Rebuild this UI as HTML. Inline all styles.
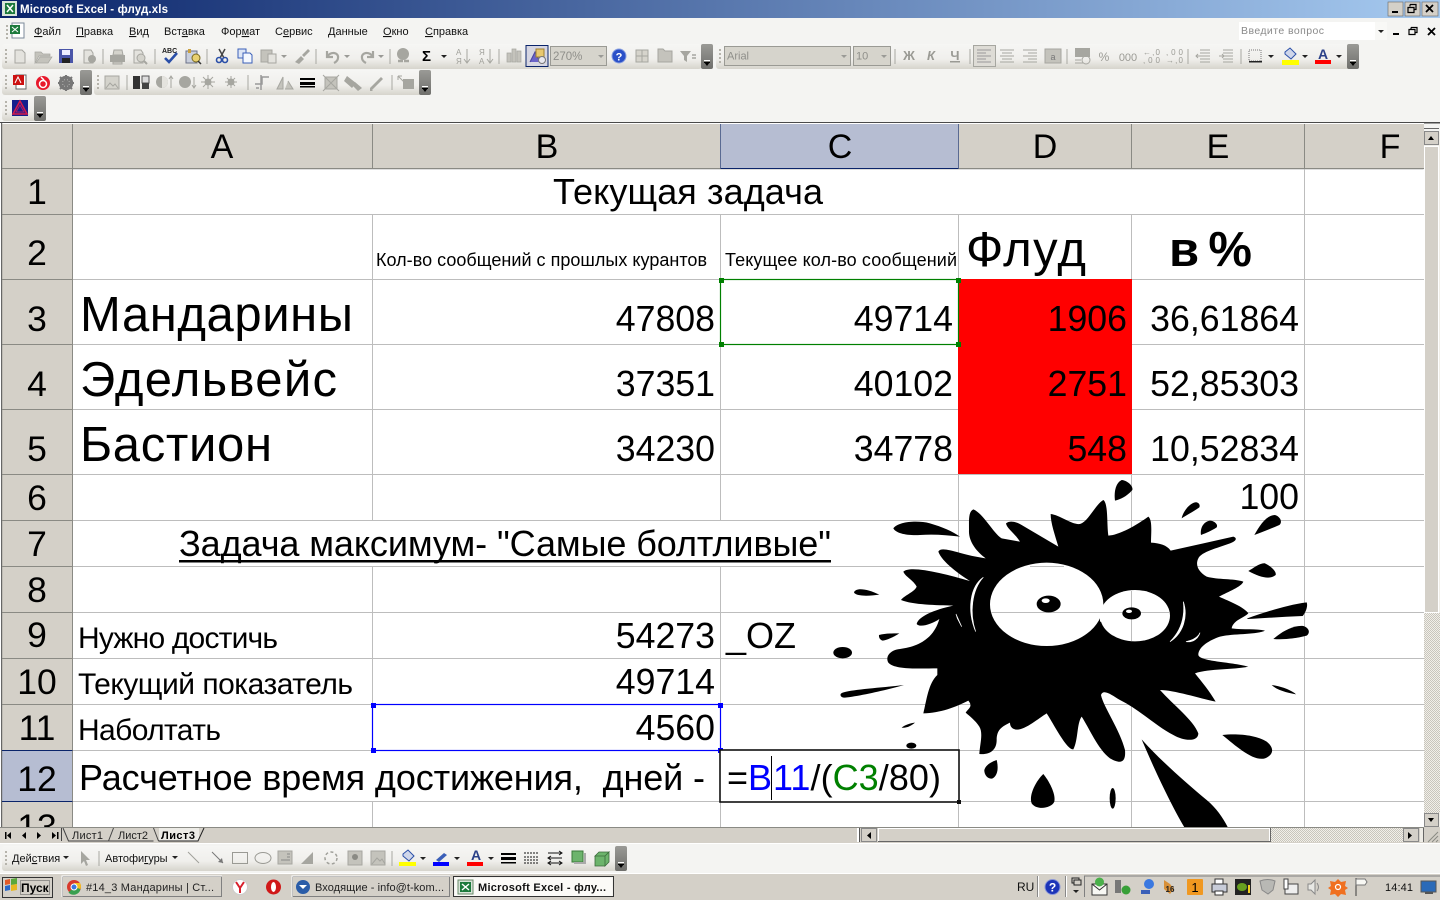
<!DOCTYPE html>
<html><head><meta charset="utf-8"><title>Microsoft Excel - флуд.xls</title>
<style>
html,body{margin:0;padding:0;width:1440px;height:900px;overflow:hidden;background:#f4f4f2}
svg{display:block}
text{font-family:"Liberation Sans","Noto Sans CJK SC",sans-serif;white-space:pre}
.u{text-decoration:underline}
.m{font-size:11px;fill:#111}
.c{font-size:36px;fill:#000}
.h{font-size:34px;fill:#000;text-anchor:middle}
.r{font-size:35.5px;fill:#000;text-anchor:middle}
.n{font-size:35.7px;fill:#000;text-anchor:end}
.b{font-size:49px;fill:#000}
.t{font-size:30px;fill:#000}
.g{fill:#a6a6a0}
.gs{stroke:#a6a6a0;fill:none}
.sep{stroke:#a8a8a2;stroke-width:1}
.sm{font-size:11px;fill:#222}
</style></head><body>
<svg width="1440" height="900" viewBox="0 0 1440 900" xmlns="http://www.w3.org/2000/svg">
<defs>
<linearGradient id="tb" x1="0" x2="1" y1="0" y2="0"><stop offset="0" stop-color="#0a246a"/><stop offset="1" stop-color="#a6caf0"/></linearGradient>
<linearGradient id="bar" x1="0" x2="0" y1="0" y2="1"><stop offset="0" stop-color="#f6f6f4"/><stop offset=".6" stop-color="#f0efec"/><stop offset="1" stop-color="#d6d4cc"/></linearGradient>
<linearGradient id="chev" x1="0" x2="0" y1="0" y2="1"><stop offset="0" stop-color="#9a9a96"/><stop offset="1" stop-color="#6f6f6c"/></linearGradient>
<pattern id="dith" width="2" height="2" patternUnits="userSpaceOnUse"><rect width="2" height="2" fill="#f1efe9"/><rect width="1" height="1" fill="#c8c5bc"/><rect x="1" y="1" width="1" height="1" fill="#c8c5bc"/></pattern>
<g id="chv"><rect width="12" height="25" rx="2" fill="url(#chev)"/><rect x="3" y="16" width="6" height="1" fill="#fff"/><path d="M3 18h6l-3 4z" fill="#000"/><rect x="3" y="18" width="6" height="1" fill="#000"/></g>
<g id="grip"><rect x="0" y="0" width="2" height="2" fill="#b5b3ab"/><rect x="0" y="4" width="2" height="2" fill="#b5b3ab"/><rect x="0" y="8" width="2" height="2" fill="#b5b3ab"/><rect x="0" y="12" width="2" height="2" fill="#b5b3ab"/></g>
<path id="dn" d="M0 0h6l-3 3z" fill="#222"/>
<path id="dng" d="M0 0h6l-3 3z" fill="#9a9a96"/>
<clipPath id="sheet"><rect x="0" y="124" width="1424" height="703"/></clipPath>
</defs>

<!-- background -->
<rect width="1440" height="900" fill="#f4f4f2"/>
<!-- title bar -->
<rect width="1440" height="18" fill="url(#tb)"/>
<rect x="2" y="1" width="15" height="15" fill="#d8e4d8"/><rect x="5" y="3" width="10" height="11" fill="#1c7a3c"/><path d="M7 5l6 7M13 5l-6 7" stroke="#fff" stroke-width="1.5"/>
<text x="20" y="13" font-size="11.5" font-weight="bold" fill="#fff" textLength="148">Microsoft Excel - флуд.xls</text>
<g>
<rect x="1388" y="2" width="15" height="14" fill="#d4d0c8" stroke="#666" stroke-width=".6"/><rect x="1392" y="11" width="6" height="2" fill="#000"/>
<rect x="1405" y="2" width="15" height="14" fill="#d4d0c8" stroke="#666" stroke-width=".6"/><path d="M1410 4.5h6v5h-2M1410 4.5v2M1408 7.5h6v5h-6z" fill="none" stroke="#000" stroke-width="1.2"/>
<rect x="1422" y="2" width="16" height="14" fill="#d4d0c8" stroke="#666" stroke-width=".6"/><path d="M1426 5l7 7M1433 5l-7 7" stroke="#000" stroke-width="1.8"/>
</g>

<!-- menu bar -->
<use href="#grip" x="6" y="25"/>
<rect x="12" y="23" width="12" height="15" fill="#fff" stroke="#7b8a9a"/><rect x="10" y="25" width="10" height="9" fill="#1c7a3c"/><path d="M12 27l6 5M18 27l-6 5" stroke="#fff"/>
<text class="m" y="35"><tspan x="34"><tspan class="u">Ф</tspan>айл</tspan><tspan x="76"><tspan class="u">П</tspan>равка</tspan><tspan x="129"><tspan class="u">В</tspan>ид</tspan><tspan x="164">Вст<tspan class="u">а</tspan>вка</tspan><tspan x="221">Фор<tspan class="u">м</tspan>ат</tspan><tspan x="275">С<tspan class="u">е</tspan>рвис</tspan><tspan x="328"><tspan class="u">Д</tspan>анные</tspan><tspan x="383"><tspan class="u">О</tspan>кно</tspan><tspan x="425"><tspan class="u">С</tspan>правка</tspan></text>
<rect x="1239" y="22" width="136" height="18" fill="#fff"/><rect x="1375" y="22" width="12" height="18" fill="#f8f8f6"/>
<text x="1241" y="34" font-size="10.5" fill="#8a8a8a" textLength="83">Введите вопрос</text>
<use href="#dn" x="1378" y="30"/>
<rect x="1393" y="33" width="6" height="2" fill="#000"/>
<path d="M1411 27.5h6v5h-2M1411 27.5v2M1409 29.5h6v5h-6z" fill="none" stroke="#000" stroke-width="1.2"/>
<path d="M1428 28l7 7M1435 28l-7 7" stroke="#000" stroke-width="1.8"/>

<!-- toolbar strips -->
<rect x="2" y="44" width="700" height="25" rx="3" fill="url(#bar)"/>
<use href="#chv" x="701" y="44"/>
<rect x="716" y="44" width="636" height="25" rx="3" fill="url(#bar)"/>
<use href="#chv" x="1347" y="44"/>
<rect x="2" y="70" width="80" height="25" rx="3" fill="url(#bar)"/>
<use href="#chv" x="80" y="70"/>
<rect x="94" y="70" width="328" height="25" rx="3" fill="url(#bar)"/>
<use href="#chv" x="419" y="70"/>
<rect x="2" y="96" width="34" height="25" rx="3" fill="url(#bar)"/>
<use href="#chv" x="34" y="96"/>
<use href="#grip" x="5" y="49"/><use href="#grip" x="5" y="75"/><use href="#grip" x="5" y="101"/><use href="#grip" x="719" y="49"/><use href="#grip" x="97" y="75"/>

<!-- toolbar 1 icons -->
<path d="M15 50h7l3 3v10H15z" fill="#e4e3de" stroke="#a6a6a0"/>
<path d="M35 63V52h6l2 2h7v2h-11l-4 7zM36 63l4-6h12l-4 6z" fill="#c4c3bc" stroke="#a6a6a0" stroke-width=".7"/>
<rect x="59" y="49" width="14" height="14" fill="#4a55a8"/><rect x="62" y="50" width="8" height="5" fill="#eef"/><rect x="62" y="58" width="8" height="5" fill="#222"/>
<path d="M84 50h7l2 3v10H84z" fill="#e4e3de" stroke="#a6a6a0"/><circle cx="92" cy="59" r="4" class="g"/>
<line class="sep" x1="103" y1="49" x2="103" y2="64"/>
<rect x="110" y="55" width="15" height="7" class="g"/><path d="M113 55l1-5h8l1 5zM113 62h9v2h-9z" fill="#d4d3cc" stroke="#a6a6a0"/>
<path d="M134 50h7l2 3v10h-9z" fill="#e4e3de" stroke="#a6a6a0"/><circle cx="141" cy="58" r="4" fill="#d4d3cc" stroke="#a6a6a0"/><path d="M144 61l3 3" stroke="#a6a6a0" stroke-width="2"/>
<line class="sep" x1="155" y1="49" x2="155" y2="64"/>
<text x="162" y="53" font-size="7" font-weight="bold" fill="#222">ABC</text><path d="M165 58l4 4 8-9" stroke="#2a4fa8" stroke-width="2.6" fill="none"/>
<rect x="186" y="51" width="11" height="12" fill="#c9cfdc" stroke="#6a7188"/><rect x="188" y="49" width="3" height="4" fill="#c8a040"/><circle cx="196" cy="58" r="4" fill="#e8d070" stroke="#7a6a20"/><path d="M198 61l3 3" stroke="#333" stroke-width="1.5"/>
<line class="sep" x1="207" y1="49" x2="207" y2="64"/>
<path d="M219 49l5 9M225 49l-5 9" stroke="#444" stroke-width="1.5"/><circle cx="219" cy="60" r="2.5" fill="none" stroke="#2a4fa8" stroke-width="1.6"/><circle cx="225" cy="60" r="2.5" fill="none" stroke="#2a4fa8" stroke-width="1.6"/>
<path d="M238 49h8l0 9h-8z" fill="#dde6f6" stroke="#3a5fb8"/><path d="M243 53h7l2 2v8h-9z" fill="#f4f8ff" stroke="#3a5fb8"/>
<rect x="261" y="50" width="11" height="12" fill="#c4c3bc" stroke="#a6a6a0"/><rect x="268" y="54" width="8" height="9" fill="#e4e3de" stroke="#a6a6a0"/>
<use href="#dng" x="281" y="55"/>
<path d="M295 62l6-6 3 3-5 5zM302 55l6-6 2 2-6 6z" class="g"/>
<line class="sep" x1="316" y1="49" x2="316" y2="64"/>
<path d="M327 51v6h6M327 57c3-6 12-5 11 1 0 2-2 4-4 5" fill="none" stroke="#a6a6a0" stroke-width="2.2"/>
<use href="#dng" x="344" y="55"/>
<path d="M373 51v6h-6M373 57c-3-6-12-5-11 1 0 2 2 4 4 5" fill="none" stroke="#a6a6a0" stroke-width="2.2"/>
<use href="#dng" x="378" y="55"/>
<line class="sep" x1="390" y1="49" x2="390" y2="64"/>
<circle cx="403" cy="54" r="6" class="g"/><path d="M398 61h5M404 61h5" stroke="#a6a6a0" stroke-width="2.5"/>
<text x="422" y="61" font-size="15" font-weight="bold" fill="#000">Σ</text>
<use href="#dn" x="441" y="55"/>
<text x="456" y="55" font-size="8" fill="#a0a09a">А</text><text x="456" y="64" font-size="8" fill="#a0a09a">Я</text><path d="M467 49v13M464 59l3 4 3-4" class="gs"/>
<text x="479" y="55" font-size="8" fill="#a0a09a">Я</text><text x="479" y="64" font-size="8" fill="#a0a09a">А</text><path d="M490 49v13M487 59l3 4 3-4" class="gs"/>
<line class="sep" x1="499" y1="49" x2="499" y2="64"/>
<path d="M507 53h4v9h-4zM512 49h4v13h-4zM517 51h4v11h-4z" fill="#c4c3bc" stroke="#a6a6a0" stroke-width=".7"/>
<rect x="526" y="45.500" width="22" height="21" fill="#d6d6e2" stroke="#0a246a"/>
<path d="M530 62l5-10 5 10" fill="#6a63c8" stroke="#4a44a0"/><rect x="536" y="49" width="8" height="8" fill="#e8c870" stroke="#a08030"/><circle cx="542" cy="60" r="3.500" fill="#e8e8f0" stroke="#777"/>
<rect x="550.500" y="46.500" width="56" height="19" fill="#d6d4cc" stroke="#9a9a94"/>
<text x="553" y="60" font-size="11.500" fill="#8f8f8a">270%</text><use href="#dng" x="598" y="55"/>
<circle cx="619" cy="56" r="7" fill="#2a50c8" stroke="#8aa0e0"/><text x="619" y="60.500" font-size="11" font-weight="bold" fill="#fff" text-anchor="middle">?</text>
<rect x="636" y="50" width="12" height="12" fill="#d6d4cc" stroke="#a6a6a0"/><path d="M642 50v12M636 56h12" class="gs"/>
<path d="M658 49h5l2 2h7v11h-14z" fill="#c4c3bc" stroke="#a6a6a0"/>
<path d="M680 51h11l-4 5v6l-3-2v-4z" class="g"/><path d="M692 55h4M692 58h4" stroke="#a6a6a0" stroke-width="1.500"/>

<!-- toolbar 1b -->
<rect x="724.500" y="46.500" width="126" height="19" fill="#d6d4cc" stroke="#9a9a94"/>
<text x="727" y="59.500" font-size="11" fill="#8f8f8a">Arial</text><use href="#dng" x="841" y="55"/>
<rect x="853.500" y="46.500" width="37" height="19" fill="#d6d4cc" stroke="#9a9a94"/>
<text x="856" y="59.500" font-size="11" fill="#8f8f8a">10</text><use href="#dng" x="881" y="55"/>
<line class="sep" x1="895" y1="49" x2="895" y2="64"/>
<text x="909" y="60" font-size="13" font-weight="bold" fill="#9a9a94" text-anchor="middle">Ж</text>
<text x="931" y="60" font-size="13" font-weight="bold" font-style="italic" fill="#9a9a94" text-anchor="middle">К</text>
<text x="955" y="60" font-size="13" font-weight="bold" fill="#9a9a94" text-anchor="middle">Ч</text><rect x="950" y="61" width="10" height="1.500" fill="#9a9a94"/>
<line class="sep" x1="970" y1="49" x2="970" y2="64"/>
<rect x="973.500" y="45.500" width="22" height="21" fill="#dedcd6" stroke="#a6a6a0"/>
<path d="M977 50h14M977 53h9M977 56h14M977 59h9M977 62h14" stroke="#999" />
<path d="M1000 50h14M1002 53h10M1000 56h14M1002 59h10M1000 62h14" stroke="#a6a6a0"/>
<path d="M1023 50h14M1028 53h9M1023 56h14M1028 59h9M1023 62h14" stroke="#a6a6a0"/>
<rect x="1045" y="49" width="16" height="14" fill="#c4c3bc" stroke="#a6a6a0"/><text x="1053" y="60" font-size="9" fill="#777" text-anchor="middle">a</text>
<line class="sep" x1="1067" y1="49" x2="1067" y2="64"/>
<rect x="1075" y="48" width="15" height="9" class="g"/><circle cx="1086" cy="60" r="4" class="gs"/><path d="M1075 60h6M1075 63h8" class="gs"/>
<text x="1104" y="61" font-size="12" fill="#9a9a94" text-anchor="middle">%</text>
<text x="1128" y="61" font-size="11" fill="#9a9a94" text-anchor="middle">000</text>
<text x="1143" y="55" font-size="8" fill="#9a9a94" textLength="17">←,0</text><text x="1143" y="63" font-size="8" fill="#9a9a94" textLength="17">,00</text>
<text x="1166" y="55" font-size="8" fill="#9a9a94" textLength="17">,00</text><text x="1166" y="63" font-size="8" fill="#9a9a94" textLength="17">→,0</text>
<line class="sep" x1="1188" y1="49" x2="1188" y2="64"/>
<path d="M1200 50h10M1200 53h10M1200 56h10M1200 59h10M1200 62h10" stroke="#a6a6a0"/><path d="M1196 56h5M1198 54l-2 2 2 2" class="gs"/>
<path d="M1223 50h10M1223 53h10M1223 56h10M1223 59h10M1223 62h10" stroke="#a6a6a0"/><path d="M1219 56h5M1222 54l2 2-2 2" class="gs"/>
<line class="sep" x1="1241" y1="49" x2="1241" y2="64"/>
<rect x="1249" y="50" width="12" height="11" fill="none" stroke="#777" stroke-dasharray="1 1"/><rect x="1249" y="61" width="13" height="1.500" fill="#222"/>
<use href="#dn" x="1268" y="55"/>
<path d="M1285 52l5-4 6 6-5 5-6-5z" fill="#cfd6ea" stroke="#2a4fa8"/><rect x="1282" y="60" width="17" height="5" fill="#ffff00"/>
<use href="#dn" x="1302" y="55"/>
<text x="1323" y="59" font-size="14" font-weight="bold" fill="#2a4088" text-anchor="middle">A</text><rect x="1315" y="60" width="16" height="4" fill="#f00"/>
<use href="#dn" x="1336" y="55"/>

<!-- toolbar 2 icons -->
<rect x="16" y="75" width="10" height="14" fill="#fff" stroke="#666"/><rect x="13" y="75" width="11" height="10" fill="#cc1111"/><path d="M15 83l3-6 3 6" stroke="#fff" fill="none"/>
<circle cx="43" cy="83" r="7" fill="#e8192c"/><circle cx="43" cy="84" r="3.500" fill="none" stroke="#fff" stroke-width="1.500"/><path d="M41 77l3 3" stroke="#fff" stroke-width="1.500"/>
<circle cx="66" cy="83" r="5.500" fill="none" stroke="#777" stroke-width="3.500"/><path d="M66 75v16M58 83h16M60 77l12 12M72 77l-12 12" stroke="#777" stroke-width="2"/>
<rect x="105" y="76" width="14" height="13" fill="#d4d3cc" stroke="#a6a6a0"/><path d="M106 88l4-5 3 3 2-2 3 4" class="gs"/>
<line class="sep" x1="127" y1="75" x2="127" y2="90"/>
<rect x="133" y="76" width="7" height="13" fill="#333"/><rect x="142" y="76" width="7" height="7" fill="#ddd" stroke="#555"/><rect x="142" y="83" width="7" height="6" fill="#444"/>
<circle cx="162" cy="82" r="6" class="g"/><path d="M162 76a6 6 0 0 1 0 12z" fill="#e4e3de"/><path d="M171 88v-11M169 79l2-3 2 3" class="gs"/>
<circle cx="185" cy="82" r="6" class="g"/><path d="M194 77v11M192 85l2 3 2-3" class="gs"/>
<circle cx="208" cy="82" r="3.500" class="g"/><path d="M208 75v14M201 82h14M203 77l10 10M213 77l-10 10" class="gs"/>
<circle cx="231" cy="82" r="3.500" class="g"/><path d="M231 76v12M225 82h12M227 78l8 8M235 78l-8 8" class="gs"/>
<line class="sep" x1="248" y1="75" x2="248" y2="90"/>
<path d="M255 84h7v-7h7M261 75v15M256 88h3" stroke="#999" fill="none" stroke-width="1.500"/>
<path d="M277 89l6-12v12zM285 89h8l-5-8" fill="#c4c3bc" stroke="#a6a6a0"/>
<rect x="300" y="78" width="15" height="2" fill="#000"/><rect x="300" y="82" width="15" height="3" fill="#000"/><rect x="300" y="86" width="15" height="1.500" fill="#000"/>
<rect x="325" y="77" width="12" height="12" fill="#c4c3bc" stroke="#a6a6a0"/><path d="M323 75l16 16M339 75l-16 16" class="gs"/>
<path d="M347 76l9 7-4 5-8-7zM355 82l7 6-4 3-5-5z" class="g"/>
<path d="M370 88l11-11 2 2-11 11zM370 88v3h3" class="g"/>
<line class="sep" x1="392" y1="75" x2="392" y2="90"/>
<rect x="403" y="79" width="11" height="10" class="g"/><path d="M398 76l7 7M398 76v4M398 76h4" class="gs"/>

<!-- toolbar 3 icon -->
<rect x="12" y="100" width="16" height="16" fill="#141f8c"/><path d="M20 101l7 13H13z" fill="none" stroke="#d81a4a" stroke-width="1.500"/><path d="M20 105l4 7h-8z" fill="none" stroke="#b01868"/>

<!-- sheet top line -->
<rect x="0" y="122" width="1440" height="1.500" fill="#4a4a4a"/>
<rect x="0" y="123" width="1424" height="704" fill="#fff"/>

<!-- headers -->
<rect x="1" y="124" width="1423" height="44" fill="#d4d0c8"/>
<rect x="1" y="124" width="71" height="703" fill="#d4d0c8"/>
<rect x="721" y="124" width="237" height="44" fill="#b6bdd2"/>
<rect x="1" y="751" width="71" height="50" fill="#b6bdd2"/>
<rect x="1" y="123" width="1.200" height="704" fill="#666"/>

<!-- red -->
<rect x="958" y="279" width="174" height="196" fill="#f00"/>

<!-- grid -->
<g stroke="#bdbdbd" stroke-width="1" fill="none" shape-rendering="crispEdges">
<path d="M72.500 169H1423.500M73 214.500H1424M73 279.500H958M1132 279.500H1424M73 344.500H958M1132 344.500H1424M73 409.500H958M1132 409.500H1424M73 474.500H1424M73 520.500H1424M73 566.500H1424M73 612.500H1424M73 658.500H1424M73 704.500H1424M73 750.500H1424M73 801.500H1424"/>
<path d="M372.500 215V520M372.500 566V750M372.500 802V827"/>
<path d="M720.500 215V520M720.500 566V827"/>
<path d="M958.500 215V279M958.500 475V827"/>
<path d="M1131.500 215V279M1131.500 475V827"/>
<path d="M1304.500 169V827"/>
</g>
<g stroke="#8a8a84" stroke-width="1" fill="none" shape-rendering="crispEdges">
<path d="M72.500 124V827M372.500 124V168M720.500 124V168M958.500 124V168M1131.500 124V168M1304.500 124V168"/>
<path d="M2 168.500H1424M2 214.500H72M2 279.500H72M2 344.500H72M2 409.500H72M2 474.500H72M2 520.500H72M2 566.500H72M2 612.500H72M2 658.500H72M2 704.500H72M2 750.500H72M2 801.500H72"/>
</g>
<path d="M720.500 168.500H958.500M2 750.500H72.500M2 801.500H72.500" fill="none" stroke="#0a246a" stroke-width="1" shape-rendering="crispEdges"/>
<path d="M720.500 124V168M958.500 124V168" fill="none" stroke="#5a6a92" stroke-width="1" shape-rendering="crispEdges"/>

<g clip-path="url(#sheet)">
<!-- header labels -->
<text class="h" x="222" y="158">A</text><text class="h" x="547" y="158">B</text><text class="h" x="840" y="158">C</text><text class="h" x="1045" y="158">D</text><text class="h" x="1218" y="158">E</text><text class="h" x="1390" y="158">F</text>
<text class="r" x="37" y="204">1</text><text class="r" x="37" y="265">2</text><text class="r" x="37" y="331">3</text><text class="r" x="37" y="396">4</text><text class="r" x="37" y="461">5</text><text class="r" x="37" y="510">6</text><text class="r" x="37" y="556">7</text><text class="r" x="37" y="602">8</text><text class="r" x="37" y="647">9</text><text class="r" x="37" y="694">10</text><text class="r" x="37" y="740">11</text><text class="r" x="37" y="791">12</text><text class="r" x="37" y="839">13</text>

<!-- cells -->
<text class="c" x="553" y="204" textLength="270">Текущая задача</text>
<text x="376" y="266" font-size="18" textLength="331">Кол-во сообщений с прошлых курантов</text>
<text x="725" y="266" font-size="18" textLength="232">Текущее кол-во сообщений</text>
<text class="b" x="966" y="266" textLength="120">Флуд</text>
<text class="b" x="1169" y="266" font-weight="bold" textLength="83">в %</text>
<text class="b" x="80" y="331" textLength="273">Мандарины</text>
<text class="b" x="80" y="396" textLength="257">Эдельвейс</text>
<text class="b" x="80" y="461" textLength="192">Бастион</text>
<text class="n" x="715" y="331">47808</text><text class="n" x="953" y="331">49714</text><text class="n" x="1127" y="331">1906</text><text class="n" x="1299" y="331">36,61864</text>
<text class="n" x="715" y="396">37351</text><text class="n" x="953" y="396">40102</text><text class="n" x="1127" y="396">2751</text><text class="n" x="1299" y="396">52,85303</text>
<text class="n" x="715" y="461">34230</text><text class="n" x="953" y="461">34778</text><text class="n" x="1127" y="461">548</text><text class="n" x="1299" y="461">10,52834</text>
<text class="n" x="1299" y="509">100</text>
<text class="c" x="179" y="556" textLength="652">Задача максимум- "Самые болтливые"</text>
<rect x="179" y="560" width="652" height="2.500" fill="#000"/>
<text class="t" x="78" y="648" textLength="200">Нужно достичь</text>
<text class="t" x="78" y="694" textLength="275">Текущий показатель</text>
<text class="t" x="78" y="740" textLength="143">Наболтать</text>
<text class="n" x="715" y="648">54273</text><text class="c" x="726" y="648">_OZ</text>
<text class="n" x="715" y="694">49714</text>
<text class="n" x="715" y="740">4560</text>
<text class="c" x="79" y="790" textLength="626">Расчетное время достижения,  дней -</text>

<!-- blot -->
<g transform="translate(820 470) scale(.33333)" fill="#000">
<path d="M460 118C490 130 520 190 545 205L600 215C585 190 560 175 558 160C570 150 590 155 610 168L715 230C705 195 692 160 692 132C720 135 755 165 780 162C805 155 825 105 850 90C865 100 860 160 865 197C900 195 950 165 985 140C998 150 993 190 993 218C1020 220 1040 225 1052 242L1150 220L1240 200C1255 205 1245 215 1230 220C1190 235 1145 245 1135 265C1125 285 1135 305 1160 320C1195 330 1240 325 1270 335C1265 350 1225 365 1197 380C1230 395 1270 410 1285 430C1270 445 1240 450 1235 475C1270 480 1310 475 1335 482C1310 495 1240 490 1200 500C1170 510 1135 530 1135 555C1140 575 1230 575 1285 590C1240 600 1170 595 1125 610C1145 635 1170 665 1187 695C1140 685 1060 660 1020 660C1060 705 1120 750 1135 790C1135 815 1095 815 1060 795C1010 770 960 720 900 690C875 675 850 655 843 675C850 710 900 780 915 840C918 875 905 885 870 865C835 840 805 770 785 740C770 760 775 810 760 838C740 840 700 760 680 730C655 745 610 785 585 778C570 775 570 760 570 758C545 770 530 780 530 810C530 840 510 855 478 852C480 820 490 790 478 770C465 750 450 740 437 728C445 715 460 710 445 692C410 710 360 730 310 730C320 690 325 640 352 615L352 595C300 595 225 600 205 578C195 560 210 540 240 537C290 530 340 510 358 447C340 460 300 475 290 462C295 440 340 420 400 407C350 405 280 405 243 390C255 375 285 365 290 350C280 330 255 320 250 305C270 285 370 310 450 333C420 315 365 275 355 245C365 225 420 255 497 265C470 245 445 215 447 180C447 150 445 125 460 118Z"/>
<path d="M905 30C925 32 940 50 937 60C920 80 900 88 885 92C882 70 885 40 905 30Z"/>
<path d="M1085 145C1090 120 1115 95 1130 97C1140 100 1140 108 1138 112C1120 125 1100 135 1085 145Z"/>
<path d="M1143 195C1140 175 1150 155 1170 152C1185 153 1195 165 1190 172C1175 182 1160 188 1143 195Z"/>
<path d="M1303 195C1320 165 1340 135 1365 135C1382 140 1388 158 1378 165C1355 175 1330 185 1303 195Z"/>
<path d="M220 175C235 155 290 150 330 160C365 170 400 185 420 200C380 195 340 192 300 195C260 197 228 190 220 175Z"/>
<path d="M1285 303C1300 295 1320 278 1335 280C1355 290 1370 305 1367 315C1350 330 1320 322 1285 303Z"/>
<path d="M102 368C105 352 140 355 178 374C150 378 110 380 102 368Z"/>
<path d="M1282 445C1340 425 1400 405 1460 397C1465 410 1455 430 1448 438C1390 440 1330 445 1282 447Z"/>
<path d="M1360 507C1385 485 1420 465 1450 468C1470 475 1470 490 1460 497C1430 505 1390 510 1360 507Z"/>
<path d="M177 495C195 490 215 490 238 490C220 502 200 510 188 512C180 510 176 503 177 495Z"/>
<ellipse cx="68" cy="548" rx="28" ry="17"/>
<path d="M62 672C70 660 170 655 252 645C200 660 120 678 75 683C65 683 60 678 62 672Z"/>
<path d="M1355 645C1380 648 1415 660 1428 673C1400 668 1370 660 1355 645Z"/>
<path d="M245 773C255 765 270 760 285 758C275 767 260 775 245 773Z"/>
<ellipse cx="274" cy="827" rx="15" ry="9"/>
<path d="M530 870C535 890 535 915 518 925C505 930 492 915 493 900C497 885 515 875 530 870Z"/>
<path d="M670 912C685 930 708 970 703 995C695 1015 650 1022 635 1000C625 975 650 930 670 912Z"/>
<ellipse cx="878" cy="985" rx="9" ry="31"/>
<path d="M1207 795C1250 790 1310 795 1340 815C1365 835 1360 855 1335 865C1300 875 1250 830 1207 795Z"/>
<path d="M965 808C1020 870 1100 940 1160 990C1190 1015 1210 1045 1225 1075L1095 1075C1050 1000 995 880 965 808Z"/>
<ellipse cx="680" cy="403" rx="170" ry="125" fill="#fff"/>
<ellipse cx="945" cy="437" rx="105" ry="77" fill="#fff"/>
<path d="M840 415L860 415L860 455L840 455Z" fill="#fff"/>
<path d="M490 322C450 350 440 420 467 485C448 430 455 360 490 322Z" fill="#fff" stroke="#fff" stroke-width="2"/>
<path d="M408 432L425 470L412 445Z" fill="#fff" stroke="#fff" stroke-width="2"/>
<path d="M1090 395C1105 440 1090 490 1050 515C1085 480 1095 440 1090 395Z" fill="#fff" stroke="#fff" stroke-width="2"/>
<path d="M1098 515C1120 510 1135 500 1140 488C1135 505 1120 518 1098 515Z" fill="#fff" stroke="#fff" stroke-width="2"/>
</g>
<g stroke="#bdbdbd" fill="none" shape-rendering="crispEdges">
<path d="M991 612.500H1169M1131.500 591V641M1030 566.500H1064"/>
</g>
<g transform="translate(820 470) scale(.33333)" fill="#000">
<ellipse cx="686" cy="402" rx="36" ry="25"/><ellipse cx="677" cy="392" rx="12" ry="7" fill="#fff"/>
<ellipse cx="935" cy="430" rx="28" ry="18"/><ellipse cx="927" cy="424" rx="9" ry="5" fill="#fff"/>
</g>

<!-- selections -->
<rect x="720.500" y="279.500" width="238" height="65" fill="none" stroke="#008000" stroke-width="1.200"/>
<rect x="719" y="278" width="5" height="5" fill="#008000"/><rect x="956" y="278" width="5" height="5" fill="#008000"/><rect x="719" y="342" width="5" height="5" fill="#008000"/><rect x="956" y="342" width="5" height="5" fill="#008000"/>
<rect x="372.500" y="704.500" width="348" height="46" fill="none" stroke="#0000ff" stroke-width="1.200"/>
<rect x="371" y="703" width="5" height="5" fill="#0000ff"/><rect x="718" y="703" width="5" height="5" fill="#0000ff"/><rect x="371" y="748" width="5" height="5" fill="#0000ff"/><rect x="718" y="748" width="5" height="5" fill="#0000ff"/>
<rect x="720" y="750" width="239" height="52" fill="#fff" stroke="#111" stroke-width="1.600"/>
<rect x="957" y="800" width="4" height="4" fill="#111"/>
<text class="c" x="727" y="790">=<tspan fill="#0000ff">B</tspan></text>
<rect x="771" y="756" width="1" height="44" fill="#000"/>
<text class="c" x="773" y="790" textLength="168"><tspan fill="#0000ff">11</tspan>/(<tspan fill="#008000">C3</tspan>/80)</text>
</g>

<!-- vertical scrollbar -->
<rect x="1424" y="124" width="16" height="703" fill="#f1efe9"/>
<rect x="1424" y="124" width="16" height="8" fill="#f4f4f2"/>
<rect x="1424" y="128" width="15" height="1" fill="#666"/>
<rect x="1424.500" y="131.500" width="14" height="13" fill="#d4d0c8" stroke="#888"/><path d="M1428 140h6l-3-4z" fill="#000"/>
<rect x="1424.500" y="146.500" width="14" height="466" fill="#d4d0c8" stroke="#fff"/>
<rect x="1424" y="613" width="16" height="200" fill="url(#dith)"/>
<rect x="1424.500" y="813.500" width="14" height="13" fill="#d4d0c8" stroke="#888"/><path d="M1428 818h6l-3 4z" fill="#000"/>

<!-- sheet tabs bar -->
<rect x="0" y="827" width="1440" height="16" fill="#d4d0c8"/>
<rect x="0" y="827" width="1424" height="1" fill="#8a8a84"/>
<g fill="#000">
<rect x="5" y="832" width="1.500" height="7"/><path d="M11 832v7l-4-3.500z"/><path d="M26 832v7l-4-3.500z"/><path d="M37 832v7l4-3.500z"/><path d="M52 832v7l4-3.500z"/><rect x="57" y="832" width="1.500" height="7"/>
</g>
<rect x="159" y="828" width="40" height="13" fill="#ecebe6"/>
<path d="M61.500 828v13M63 828l5.500 13h40l5-13" fill="none" stroke="#444"/>
<path d="M108.500 841h45l-5-0M153.500 828l5 13" fill="none" stroke="#444"/>
<path d="M158.500 841h39.500l6-13" fill="none" stroke="#222"/>
<text x="72" y="839" class="sm" textLength="31">Лист1</text>
<text x="118" y="839" class="sm" textLength="30">Лист2</text>
<text x="161" y="839" font-size="11" font-weight="bold" fill="#000" textLength="34">Лист3</text>
<!-- h scroll -->
<rect x="857" y="828" width="2" height="14" fill="#fff"/><rect x="859" y="828" width="1" height="14" fill="#555"/>
<rect x="861.500" y="828.500" width="15" height="13" fill="#d4d0c8" stroke="#888"/><path d="M871 832v7l-4-3.500z" fill="#000"/>
<rect x="878.500" y="828.500" width="391" height="13" fill="#d4d0c8" stroke="#fff"/><rect x="878" y="841" width="392" height="1" fill="#666"/><rect x="1270" y="828" width="1" height="14" fill="#666"/>
<rect x="1271" y="828" width="133" height="14" fill="url(#dith)"/>
<rect x="1403.500" y="828.500" width="15" height="13" fill="#d4d0c8" stroke="#888"/><path d="M1408 832v7l4-3.500z" fill="#000"/>
<rect x="1420" y="828" width="3" height="14" fill="#eeece6"/><rect x="1423" y="828" width="1" height="14" fill="#666"/>
<path d="M1428 842l10-10M1432 842l6-6M1436 842l2-2" stroke="#8a8a84"/>

<!-- drawing bar -->
<rect x="0" y="843" width="1440" height="30" fill="#f4f4f2"/>
<rect x="0" y="843" width="1440" height="1" fill="#fff"/>
<rect x="2" y="846" width="625" height="25" rx="3" fill="url(#bar)"/>
<use href="#chv" x="615" y="846"/>
<use href="#grip" x="5" y="851"/>
<text x="12" y="862" font-size="11" fill="#111">Дей<tspan class="u">с</tspan>твия</text><use href="#dn" x="63" y="856"/>
<path d="M81 851v13l3-3 2 5 2-1-2-5h4z" class="g"/>
<line class="sep" x1="99" y1="851" x2="99" y2="866"/>
<text x="105" y="862" font-size="11" fill="#111">Автофи<tspan class="u">г</tspan>уры</text><use href="#dn" x="172" y="856"/>
<path d="M188 852l11 11" stroke="#a0a09a"/><path d="M212 852l11 11" stroke="#777"/><path d="M223 863l-5-1 4-4z" fill="#777"/>
<rect x="232.500" y="852.500" width="15" height="11" fill="none" stroke="#9a9a94"/>
<ellipse cx="263" cy="858" rx="8" ry="5.500" fill="none" stroke="#9a9a94"/>
<rect x="278" y="851" width="14" height="13" fill="#c4c3bc" stroke="#a6a6a0"/><path d="M287 854h3M287 857h3M281 860h9" stroke="#888"/>
<path d="M301 864l12-12v12z" class="g"/>
<circle cx="331" cy="858" r="6" fill="none" stroke="#a0a09a" stroke-width="1.500" stroke-dasharray="3 2.500"/>
<rect x="348" y="851" width="14" height="14" fill="#c4c3bc" stroke="#a6a6a0"/><circle cx="355" cy="857" r="3" fill="#8a8a84"/>
<rect x="371" y="851" width="14" height="14" fill="#c4c3bc" stroke="#a6a6a0"/><path d="M372 864l5-6 3 3 2-2 3 5" class="gs"/>
<line class="sep" x1="392" y1="851" x2="392" y2="866"/>
<path d="M403 854l5-4 6 6-5 5-6-5z" fill="#cfd6ea" stroke="#2a4fa8"/><rect x="399" y="862" width="17" height="4" fill="#ffff00"/>
<use href="#dn" x="420" y="857"/>
<path d="M436 860l8-7 3 2-8 7z" fill="#3a5fb8"/><rect x="433" y="862" width="16" height="4" fill="#0000ff"/>
<use href="#dn" x="454" y="857"/>
<text x="476" y="860" font-size="14" font-weight="bold" fill="#2a4088" text-anchor="middle">A</text><rect x="467" y="862" width="16" height="4" fill="#f00"/>
<use href="#dn" x="488" y="857"/>
<rect x="501" y="853" width="15" height="2" fill="#000"/><rect x="501" y="857" width="15" height="3" fill="#000"/><rect x="501" y="862" width="15" height="1.500" fill="#000"/>
<path d="M524 853h15M524 857h15M524 860h15M524 863h15" stroke="#111" stroke-dasharray="2 1"/>
<path d="M548 853h14M559 851l3 2-3 2M562 858h-14M551 856l-3 2 3 2M548 863h14M551 861l-3 2 3 2M559 861l3 2-3 2" fill="none" stroke="#111"/>
<rect x="572" y="851" width="11" height="11" fill="#6cb46c" stroke="#3a7a3a"/><path d="M574 863h11v-10" stroke="#aaa" fill="none" stroke-width="2"/>
<path d="M595 856h10v10h-10zM595 856l4-4h10l-4 4zM605 866l4-4v-10l-4 4z" fill="#6cb46c" stroke="#3a6a3a" stroke-width=".8"/>

<!-- taskbar -->
<rect x="0" y="873" width="1440" height="27" fill="#d4d0c8"/>
<rect x="0" y="873" width="1440" height="1" fill="#fff"/>
<!-- start -->
<rect x="2.500" y="877.500" width="50" height="20" fill="#d4d0c8" stroke="#333"/>
<path d="M5 880l5-1v5l-5 1z" fill="#e05a28"/><path d="M11 879l6-1v6l-6 1z" fill="#5aa83a"/><path d="M5 886l5-1v5l-5 1z" fill="#2a68c8"/><path d="M11 885l6-1v6l-6 1z" fill="#e8b820"/>
<rect x="20.500" y="880.500" width="29" height="14" fill="none" stroke="#555" stroke-dasharray="1 1"/>
<text x="21" y="892" font-size="12" font-weight="bold" fill="#000">Пуск</text>
<!-- chrome -->
<rect x="62.500" y="876.500" width="159" height="20" fill="#d4d0c8" stroke="#808080"/><path d="M62 897v-21h160" fill="none" stroke="#fff"/>
<circle cx="74" cy="887" r="7" fill="#d8392c"/><path d="M74 887l6.500 2a7 7 0 0 1-12 3.500z" fill="#38a050"/><path d="M74 887l6.500 2a7 7 0 0 0-.5-6H74z" fill="#f4c020"/><circle cx="74" cy="887" r="3" fill="#3a78e0" stroke="#fff"/>
<text x="86" y="891" font-size="11" fill="#222" textLength="128">#14_3 Мандарины | Ст...</text>
<circle cx="240" cy="887" r="7.500" fill="#fff" stroke="#ccc"/><path d="M236 882l4 6 4-6M240 888v5" stroke="#d8202c" stroke-width="2" fill="none"/>
<ellipse cx="273.500" cy="887" rx="7.500" ry="7.500" fill="#d01818"/><ellipse cx="273.500" cy="887" rx="2.500" ry="5" fill="#fff"/>
<!-- inbox -->
<rect x="292.500" y="876.500" width="157" height="20" fill="#d4d0c8" stroke="#808080"/><path d="M292 897v-21h158" fill="none" stroke="#fff"/>
<circle cx="303" cy="887" r="7" fill="#2a5ca8"/><path d="M299 885h8l-4 4z" fill="#fff"/>
<text x="315" y="891" font-size="11" fill="#222" textLength="129">Входящие - info@t-kom...</text>
<!-- excel -->
<rect x="453.500" y="876.500" width="160" height="20" fill="#f4f3ef" stroke="#333"/><rect x="455" y="878" width="157" height="18" fill="#fbfaf7"/>
<rect x="458" y="880" width="15" height="14" fill="#d8e4d8" stroke="#6a8a6a"/><rect x="460" y="882" width="11" height="10" fill="#1c7a3c"/><path d="M462 884l7 6M469 884l-7 6" stroke="#fff" stroke-width="1.400"/>
<text x="478" y="891" font-size="11" font-weight="bold" fill="#111" textLength="128">Microsoft Excel - флу...</text>
<!-- tray -->
<text x="1017" y="891" font-size="12" fill="#111">RU</text>
<path d="M1037.500 876v21M1065.500 876v21" stroke="#888"/><path d="M1038.500 876v21M1066.500 876v21" stroke="#fff"/>
<circle cx="1052.500" cy="887" r="7.500" fill="#1c34b8" stroke="#8a96d8"/><text x="1052.500" y="891.500" font-size="12" font-weight="bold" fill="#fff" text-anchor="middle">?</text>
<rect x="1072" y="878" width="7" height="5" fill="none" stroke="#222"/><rect x="1074" y="880" width="7" height="5" fill="#d4d0c8" stroke="#222"/><use href="#dn" x="1073" y="890"/>
<path d="M1084.500 897v-21H1440" fill="none" stroke="#808080"/>
<rect x="1092" y="884" width="15" height="11" fill="#f8f8f4" stroke="#333"/><path d="M1092 884l7.500 6 7.500-6" fill="none" stroke="#333"/><circle cx="1099.500" cy="882" r="4.500" fill="#4ab04a"/>
<rect x="1115" y="880" width="6" height="13" fill="#777"/><circle cx="1126" cy="890" r="4.500" fill="#38a038"/>
<rect x="1141" y="890" width="9" height="4" fill="#3a5fb8"/><circle cx="1149" cy="884" r="5" fill="#3a78e0"/>
<path d="M1164 880l6 4 4 5-4 5-6-5z" fill="#d89038"/><text x="1170" y="892" font-size="8" font-weight="bold" fill="#222" text-anchor="middle">16</text>
<rect x="1187" y="879" width="16" height="16" rx="1" fill="#f09820"/><text x="1195" y="892" font-size="13" fill="#000" text-anchor="middle">1</text>
<rect x="1212" y="884" width="15" height="8" fill="#c8ccd8" stroke="#333"/><rect x="1215" y="879" width="8" height="5" fill="#fff" stroke="#333"/><rect x="1215" y="891" width="8" height="4" fill="#fff" stroke="#333"/>
<rect x="1235" y="879" width="16" height="16" fill="#222"/><ellipse cx="1242" cy="887" rx="5" ry="4" fill="#68a020"/><rect x="1248" y="885" width="2" height="8" fill="#f0d020"/>
<path d="M1260 881c5-2 10-2 15 0l-2 9-5 4-6-4z" fill="#b8b8b4" stroke="#888"/>
<rect x="1285" y="884" width="13" height="10" fill="#eee" stroke="#444"/><rect x="1284" y="879" width="4" height="10" fill="#fff" stroke="#444"/>
<path d="M1308 884h3l4-4v14l-4-4h-3z" fill="#e8e8e4" stroke="#888"/><path d="M1317 883c2 3 2 5 0 8" fill="none" stroke="#888"/>
<path d="M1338 879l3 3 5-1-1 5 3 2-3 2 1 5-5-1-3 3-3-3-5 1 1-5-3-2 3-2-1-5 5 1z" fill="#f07020"/><circle cx="1338" cy="887" r="2.500" fill="none" stroke="#fff" stroke-width="1.200"/>
<path d="M1356 878v18" stroke="#555" stroke-width="1.200"/><path d="M1356 879h9l2 3-2 3h-9z" fill="#f8f8f4" stroke="#777"/>
<text x="1385" y="891" font-size="11" fill="#111" textLength="28">14:41</text>
<rect x="1421" y="881" width="15" height="11" fill="#2a6ab8" stroke="#555"/><rect x="1425" y="892" width="8" height="2" fill="#555"/>
</svg>
</body></html>
